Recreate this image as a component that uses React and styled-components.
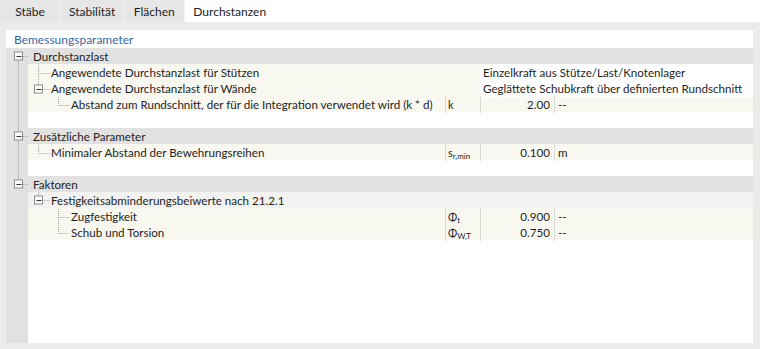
import React from 'react'
import styled, { createGlobalStyle } from 'styled-components'

const GlobalStyle = createGlobalStyle`
  html, body {
    margin: 0;
    padding: 0;
    background: #ffffff;
  }
  body {
    font-family: Lato, "Noto Sans", sans-serif;
    font-size: 11.6px;
    color: #1e1e1e;
  }
`

const CREAM = '#f8f8f0'
const GROUP = '#e1e1e1'
const LINE = '#a4a4a4'

const rows = [
  { kind: 'group', label: 'Durchstanzlast', first: true },
  {
    kind: 'item',
    level: 1,
    label: 'Angewendete Durchstanzlast für Stützen',
    text: 'Einzelkraft aus Stütze/Last/Knotenlager',
  },
  {
    kind: 'item',
    level: 1,
    label: 'Angewendete Durchstanzlast für Wände',
    text: 'Geglättete Schubkraft über definierten Rundschnitt',
    expand: true,
    last: true,
  },
  {
    kind: 'item',
    level: 2,
    label: 'Abstand zum Rundschnitt, der für die Integration verwendet wird (k * d)',
    sym: ['k'],
    value: '2.00',
    unit: '--',
    last: true,
  },
  { kind: 'blank' },
  { kind: 'group', label: 'Zusätzliche Parameter' },
  {
    kind: 'item',
    level: 1,
    label: 'Minimaler Abstand der Bewehrungsreihen',
    sym: ['s', 'r,min'],
    value: '0.100',
    unit: 'm',
    last: true,
  },
  { kind: 'blank' },
  { kind: 'group', label: 'Faktoren', lastGroup: true },
  {
    kind: 'item',
    level: 1,
    label: 'Festigkeitsabminderungsbeiwerte nach 21.2.1',
    expand: true,
    last: true,
    sub: true,
  },
  { kind: 'item', level: 2, label: 'Zugfestigkeit', sym: ['Φ', 't'], value: '0.900', unit: '--' },
  {
    kind: 'item',
    level: 2,
    label: 'Schub und Torsion',
    sym: ['Φ', 'W,T'],
    value: '0.750',
    unit: '--',
    last: true,
  },
]

// index of the last group; the root line stops there
const lastGroupIndex = rows.findIndex((r) => r.lastGroup)

const Expander = ({ x, y }) => (
  <g>
    <rect x={x - 4} y={y - 4} width="8" height="8" fill="#fdfdfd" stroke="#8e8e8e" />
    <line x1={x - 2} y1={y + 0.5} x2={x + 3} y2={y + 0.5} stroke="#333" />
  </g>
)

const GutterLines = ({ row, index }) => {
  const cx = 12.5
  const isGroup = row.kind === 'group'
  const showFull = !isGroup && index < lastGroupIndex
  return (
    <svg width="22" height="16">
      {showFull && <line x1={cx} y1="0" x2={cx} y2="16" stroke={LINE} strokeDasharray="1 1" />}
      {isGroup && !row.first && (
        <line x1={cx} y1="0" x2={cx} y2="4" stroke={LINE} strokeDasharray="1 1" />
      )}
      {isGroup && !row.lastGroup && (
        <line x1={cx} y1="13" x2={cx} y2="16" stroke={LINE} strokeDasharray="1 1" />
      )}
      {isGroup && (
        <>
          <line x1="17" y1="8.5" x2="22" y2="8.5" stroke={LINE} strokeDasharray="1 1" />
          <Expander x={12.5} y={8} />
        </>
      )}
    </svg>
  )
}

const IndentLines = ({ row }) => {
  const width = row.level * 20 + 2
  const cx = (row.level - 1) * 20 + 10.5
  return (
    <svg width={width} height="16">
      {row.expand ? (
        <>
          <line x1={cx} y1="0" x2={cx} y2="4" stroke={LINE} strokeDasharray="1 1" />
          <line x1={cx + 5} y1="8.5" x2={width} y2="8.5" stroke={LINE} strokeDasharray="1 1" />
          <Expander x={cx} y={8} />
        </>
      ) : (
        <>
          <line x1={cx} y1="0" x2={cx} y2={row.last ? 8.5 : 16} stroke={LINE} strokeDasharray="1 1" />
          <line x1={cx} y1="8.5" x2={width} y2="8.5" stroke={LINE} strokeDasharray="1 1" />
        </>
      )}
    </svg>
  )
}

export default function App() {
  return (
    <>
      <GlobalStyle />
      <TabBar>
        <Tab>Stäbe</Tab>
        <Tab>Stabilität</Tab>
        <Tab>Flächen</Tab>
        <Tab $active>Durchstanzen</Tab>
      </TabBar>
      <Panel>
        <Content>
          <Header>Bemessungsparameter</Header>
          <Tree>
            {rows.map((row, i) => (
              <Row key={i} $kind={row.kind} $sub={row.sub}>
                <Gutter>
                  <GutterLines row={row} index={i} />
                </Gutter>
                {row.kind !== 'blank' && (
                  <LabelCell $group={row.kind === 'group'}>
                    {row.kind === 'item' && <IndentLines row={row} />}
                    <span>{row.label}</span>
                  </LabelCell>
                )}
                {row.text && <TextValue>{row.text}</TextValue>}
                {row.value && (
                  <>
                    <SymCell>
                      {row.sym[0]}
                      {row.sym[1] && <sub>{row.sym[1]}</sub>}
                    </SymCell>
                    <ValueCell>{row.value}</ValueCell>
                    <UnitCell>{row.unit}</UnitCell>
                  </>
                )}
              </Row>
            ))}
          </Tree>
        </Content>
      </Panel>
    </>
  )
}

const TabBar = styled.div`
  display: flex;
  height: 22px;
  background: #ffffff;
`

const Tab = styled.div`
  min-width: 61px;
  padding: 1px 8px 0;
  box-sizing: border-box;
  display: flex;
  align-items: center;
  justify-content: center;
  background: ${({ $active }) => ($active ? '#ffffff' : '#e6e6e6')};
  border-right: 1px solid ${({ $active }) => ($active ? 'transparent' : '#f2f2f2')};
  font-size: 12px;
  color: #1e1e1e;
`

const Panel = styled.div`
  height: 327px;
  box-sizing: border-box;
  background: #ebebeb;
  padding: 8px 7px 6px 6px;
  display: flex;
`

const Content = styled.div`
  flex: 1;
  background: #ffffff;
  display: flex;
  flex-direction: column;
`

const Header = styled.div`
  height: 18px;
  line-height: 19px;
  padding-left: 8px;
  font-size: 12px;
  color: #3a68a6;
`

const Tree = styled.div`
  flex: 1;
  background: linear-gradient(to right, ${GROUP} 22px, #ffffff 22px);
`

const rowBackground = ({ $kind, $sub }) => {
  if ($kind === 'group') return GROUP
  if ($kind === 'item') return `linear-gradient(to right, transparent 22px, ${$sub ? '#f2f2f0' : CREAM} 22px)`
  return 'transparent'
}

const Row = styled.div`
  display: grid;
  grid-template-columns: 22px 417px 35px 74px 1fr;
  height: 16px;
  line-height: 17px;
  background: ${rowBackground};
  white-space: nowrap;
`

const Gutter = styled.div`
  display: flex;
  height: 16px;
`

const LabelCell = styled.div`
  display: flex;
  align-items: center;
  padding-left: ${({ $group }) => ($group ? '4px' : '0')};
  overflow: hidden;

  span {
    padding-left: 1px;
  }
`

const TextValue = styled.div`
  grid-column: 4 / 6;
  background: #ffffff;
  padding-left: 3px;
`

const SymCell = styled.div`
  border-left: 1px solid #dadad4;
  padding-left: 2px;
  font-size: 11px;

  sub {
    font-size: 8px;
    vertical-align: -2px;
    line-height: 0;
  }
`

const ValueCell = styled.div`
  border-left: 1px solid #dadad4;
  text-align: right;
  padding-right: 4px;
`

const UnitCell = styled.div`
  border-left: 1px solid #dadad4;
  padding-left: 3px;
`
